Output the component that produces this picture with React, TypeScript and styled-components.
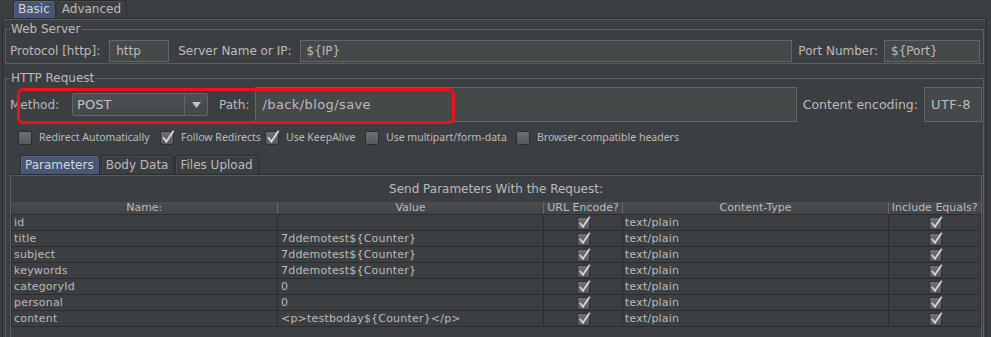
import React from 'react';
import styled, { createGlobalStyle } from 'styled-components';

const GlobalStyle = createGlobalStyle`
    html, body {
        margin: 0;
        padding: 0;
        background: #3c3f41;
    }
    body {
        font-family: "DejaVu Sans", Verdana, sans-serif;
        color: #bbbbbb;
        overflow: hidden;
    }
`;

const rows = [
    { name: 'id', value: '' },
    { name: 'title', value: '7ddemotest${Counter}' },
    { name: 'subject', value: '7ddemotest${Counter}' },
    { name: 'keywords', value: '7ddemotest${Counter}' },
    { name: 'categoryId', value: '0' },
    { name: 'personal', value: '0' },
    { name: 'content', value: '<p>testboday${Counter}</p>' },
];

const options = [
    { label: 'Redirect Automatically', checked: false, width: 142 },
    { label: 'Follow Redirects', checked: true, width: 105 },
    { label: 'Use KeepAlive', checked: true, width: 100 },
    { label: 'Use multipart/form-data', checked: false, width: 151 },
    { label: 'Browser-compatible headers', checked: false, width: 200 },
];

function CheckIcon(props: { checked: boolean; size?: number }) {
    const size = props.size || 15;
    return (
        <svg width={size} height={size} viewBox="0 0 15 15">
            <defs>
                <linearGradient id="cbfill" x1="0" y1="0" x2="0" y2="1">
                    <stop offset="0" stopColor="#6e7173" />
                    <stop offset="1" stopColor="#56595b" />
                </linearGradient>
            </defs>
            <rect x="0.5" y="1.5" width="13" height="13" rx="2" fill="url(#cbfill)" stroke="#2a2c2e" />
            {props.checked && (
                <path d="M3 7.2 L6.4 11.6 L13.6 0.8" fill="none" stroke="#d8d8d8" strokeWidth="1.8" />
            )}
        </svg>
    );
}

function App() {
    return (
        <Page>
            <GlobalStyle />
            <TabStrip>
                <Tab $active>Basic</Tab>
                <Tab>Advanced</Tab>
            </TabStrip>
            <TabBody>
                <Group>
                    <Legend>Web Server</Legend>
                    <FieldRow>
                        <Label>Protocol [http]:</Label>
                        <Field $width={60} $left={3}>http</Field>
                        <Label $left={3}>Server Name or IP:</Label>
                        <Field $grow $left={2}>{'${IP}'}</Field>
                        <Label>Port Number:</Label>
                        <Field $width={96}>{'${Port}'}</Field>
                    </FieldRow>
                </Group>
                <HttpGroup>
                    <Legend>HTTP Request</Legend>
                    <MethodRow>
                        <Label>Method:</Label>
                        <Combo>
                            <ComboText>POST</ComboText>
                            <ComboArrow>
                                <svg width="9" height="6" viewBox="0 0 9 6">
                                    <path d="M0 0 L9 0 L4.5 6 Z" fill="#c4c4c4" />
                                </svg>
                            </ComboArrow>
                        </Combo>
                        <Label $left={5}>Path:</Label>
                        <BigField $grow>/back/blog/save</BigField>
                        <Label $size={12.5}>Content encoding:</Label>
                        <BigField $width={58}>UTF-8</BigField>
                        <Highlight />
                    </MethodRow>
                    <OptionRow>
                        {options.map((o) => (
                            <Option key={o.label} $width={o.width}>
                                <CheckIcon checked={o.checked} />
                                <span>{o.label}</span>
                            </Option>
                        ))}
                    </OptionRow>
                    <InnerTabs>
                        <Tab $active $tall>Parameters</Tab>
                        <Tab $tall>Body Data</Tab>
                        <Tab $tall>Files Upload</Tab>
                    </InnerTabs>
                    <InnerBody>
                        <Caption>Send Parameters With the Request:</Caption>
                        <Table>
                            <colgroup>
                                <col style={{ width: 266 }} />
                                <col style={{ width: 266 }} />
                                <col style={{ width: 79 }} />
                                <col style={{ width: 266 }} />
                                <col style={{ width: 92 }} />
                            </colgroup>
                            <thead>
                                <tr>
                                    <Th>Name:</Th>
                                    <Th>Value</Th>
                                    <Th>URL Encode?</Th>
                                    <Th>Content-Type</Th>
                                    <Th>Include Equals?</Th>
                                </tr>
                            </thead>
                            <tbody>
                                {rows.map((r) => (
                                    <tr key={r.name}>
                                        <Td>{r.name}</Td>
                                        <Td $pad={3}>{r.value}</Td>
                                        <Td $center>
                                            <CheckIcon checked size={14} />
                                        </Td>
                                        <Td>text/plain</Td>
                                        <Td $center>
                                            <CheckIcon checked size={14} />
                                        </Td>
                                    </tr>
                                ))}
                            </tbody>
                        </Table>
                    </InnerBody>
                </HttpGroup>
            </TabBody>
        </Page>
    );
}

const Page = styled.div`
    width: 991px;
    height: 337px;
    overflow: hidden;
    background: #3c3f41;
`;

const TabStrip = styled.div`
    display: flex;
    align-items: flex-end;
    height: 18px;
    padding-left: 13px;
`;

const Tab = styled.div<{ $active?: boolean; $tall?: boolean }>`
    height: ${(p) => (p.$tall ? 18 : 17)}px;
    line-height: ${(p) => (p.$tall ? 18 : 16)}px;
    padding: 0 5px 0 4px;
    font-size: 12px;
    color: ${(p) => (p.$active ? '#d2d6dc' : '#bbbbbb')};
    background: ${(p) => (p.$active ? '#475674' : '#3c3f41')};
    border: 1px solid #2b2d2f;
    border-bottom: none;
    border-radius: 3px 3px 0 0;
    box-shadow: inset 1px 1px 0 ${(p) => (p.$active ? '#566583' : '#4a4d4f')};
    margin-right: 1px;
`;

const TabBody = styled.div`
    border-top: 1px solid #2b2d2f;
    border-left: 1px solid #2b2d2f;
    border-right: 1px solid #2b2d2f;
    box-shadow: inset 0 1px 0 #4e5b78;
    margin: 0 4px 0 2px;
    padding: 2px 2px 0 2px;
    height: 400px;
`;

const Group = styled.fieldset`
    margin: 0;
    padding: 3px 3px 1px 4px;
    border: 1px solid #5d6062;
    min-width: 0;
`;

const HttpGroup = styled(Group)`
    margin-top: 6px;
    padding: 1px 1px 0 4px;
    border-bottom: none;
`;

const Legend = styled.legend`
    padding: 0 1px;
    font-size: 12px;
    line-height: 16px;
    color: #bbbbbb;
`;

const FieldRow = styled.div`
    display: flex;
    align-items: center;
    gap: 6px;
    height: 22px;
`;

const Label = styled.span<{ $left?: number; $size?: number }>`
    font-size: ${(p) => p.$size || 12}px;
    white-space: nowrap;
    margin-left: ${(p) => p.$left || 0}px;
    color: #bbbbbb;
`;

const Field = styled.div<{ $width?: number; $grow?: boolean; $left?: number }>`
    box-sizing: border-box;
    height: 22px;
    line-height: 20px;
    width: ${(p) => (p.$width ? p.$width + 'px' : 'auto')};
    flex: ${(p) => (p.$grow ? '1' : 'none')};
    margin-left: ${(p) => p.$left || 0}px;
    padding: 0 6px;
    border: 1px solid #646668;
    background: #45494a;
    font-size: 12px;
    color: #bbbbbb;
    white-space: nowrap;
`;

const BigField = styled(Field)`
    height: 35px;
    line-height: 33px;
    font-size: 13px;
    letter-spacing: 0.4px;
`;

const MethodRow = styled.div`
    position: relative;
    display: flex;
    align-items: center;
    gap: 6px;
    height: 35px;
    padding-left: 0;
`;

const Combo = styled.div`
    box-sizing: border-box;
    display: flex;
    width: 136px;
    height: 23px;
    margin-left: 7px;
    border: 1px solid #646668;
    border-radius: 2px;
    background: linear-gradient(#4d5153, #45484a);
`;

const ComboText = styled.div`
    flex: 1;
    padding-left: 4px;
    line-height: 21px;
    font-size: 13px;
    color: #c4c4c4;
`;

const ComboArrow = styled.div`
    width: 22px;
    display: flex;
    align-items: center;
    justify-content: center;
    border-left: 1px solid #646668;
`;

const Highlight = styled.div`
    position: absolute;
    left: 7px;
    top: 1px;
    width: 438px;
    height: 36px;
    box-sizing: border-box;
    border: 3px solid #f0101c;
    border-radius: 6px;
    pointer-events: none;
`;

const OptionRow = styled.div`
    display: flex;
    align-items: center;
    height: 16px;
    margin-top: 7px;
    padding-left: 8px;
`;

const Option = styled.div<{ $width: number }>`
    display: flex;
    align-items: center;
    gap: 6px;
    width: ${(p) => p.$width}px;
    flex: none;
    font-family: "Noto Sans", sans-serif;
    font-size: 10.5px;
    color: #bbbbbb;
    white-space: nowrap;
`;

const InnerTabs = styled.div`
    display: flex;
    align-items: flex-end;
    height: 19px;
    margin-top: 10px;
    padding-left: 10px;
`;

const InnerBody = styled.div`
    border-top: 1px solid #2b2d2f;
    border-left: 1px solid #5d6062;
    border-right: 1px solid #5d6062;
    box-shadow: inset 0 1px 0 #4e5b78;
    padding-top: 1px;
    height: 200px;
`;

const Caption = styled.div`
    height: 26px;
    line-height: 26px;
    text-align: center;
    font-size: 12px;
    color: #bbbbbb;
`;

const Table = styled.table`
    width: 969px;
    border-collapse: collapse;
    table-layout: fixed;
    font-size: 11px;
    color: #bbbbbb;
`;

const Th = styled.th`
    height: 12px;
    padding: 0;
    line-height: 12px;
    font-weight: normal;
    text-align: center;
    background: linear-gradient(#4a4d4f, #424547);
    border-right: 1px solid #66696b;
    border-bottom: 1px solid #2b2d2f;
    white-space: nowrap;
    overflow: hidden;
    &:last-child {
        border-right: none;
    }
`;

const Td = styled.td<{ $center?: boolean; $pad?: number }>`
    height: 15px;
    padding: 0 0 0 ${(p) => (p.$pad !== undefined ? p.$pad : 2)}px;
    line-height: 15px;
    border: 1px solid #2b2d2f;
    text-align: ${(p) => (p.$center ? 'center' : 'left')};
    white-space: nowrap;
    overflow: hidden;
    letter-spacing: 0.2px;
    & svg {
        display: block;
        margin: 0 auto;
    }
`;

export default App;
